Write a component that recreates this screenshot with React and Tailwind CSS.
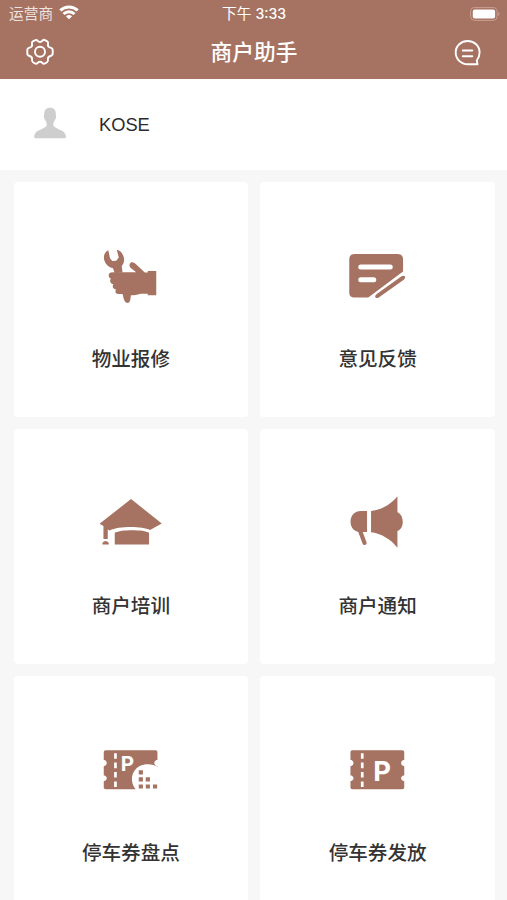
import React from 'react'

const RepairIcon = () => (
    <svg viewBox="1.25 0 80 75" className="w-20 h-[75px] fill-[#a67362]">
        <path d="M18.6 15.2 C14.5 17 13.4 21.5 14.6 25.5 C15.8 29.5 19 32.3 23.2 33.3 L25 38 L32.8 37.5 L32 31 C34.3 28.5 35 25 33.8 21.5 C32.7 18 30.2 15.4 27 14.8 L29 22.5 L26.5 25.8 L22.5 26 L20.2 23.2 Z" />
        <path d="M24 37.3 H46.5 L41 33 C39 31 39.5 28 42 27.3 C43.5 27 44.5 27.8 46 29 L55 37.5 H58 V36 H66.5 V60.3 H58 V58.8 H51 C47 59.8 44 60.3 41.2 60.3 L40.5 65 C40 67.5 38.5 68.3 37 67.8 C35.5 67.3 34.7 66 34 64 L32.8 59 H28 C25.5 58.5 25 56.5 26.3 54.5 C23.3 54.3 22 51.5 23.7 49.3 C20.5 48.8 19.5 46 21.2 43.6 C18.2 42.8 18.3 38 21 37.4 Z" />
    </svg>
)

const FeedbackIcon = () => (
    <svg viewBox="3.25 0 80 75" className="w-20 h-[75px] fill-[#a67362]">
        <path d="M19.5 19 H63 Q68.3 19 68.3 24.5 V36.5 L33.5 62.5 H19.5 Q14.5 62.5 14.5 57.5 V24.5 Q14.5 19 19.5 19 Z" />
        <path d="M26 32 H55.5 M26 44.7 H39" fill="none" stroke="#fff" strokeWidth="5" strokeLinecap="round" />
        <path d="M66.8 41.3 Q69.5 39.8 70.3 41.7 Q70.8 43.2 69 44.7 L44 62.4 Q41.5 63.6 40.5 62.2 Q39.8 60.8 42 59.1 Z" />
    </svg>
)

const TrainingIcon = () => (
    <svg viewBox="1.25 -3 80 75" className="w-20 h-[75px] fill-[#a67362]">
        <path d="M41.3 14 L72 38.5 L60.3 45 C53 41.2 29 40.8 20 45.5 L18 44.5 V54 H13.7 V41 L9.8 38.8 Z" />
        <path d="M25 59.6 V47.8 C31 44.5 54 44.5 59.3 47.8 V59.6 Z" />
        <path d="M12.7 59.6 V57.8 Q15.8 54.2 19 57.8 V59.6 Z" />
    </svg>
)

const NoticeIcon = () => (
    <svg viewBox="3.25 -3 80 75" className="w-20 h-[75px] fill-[#a67362]">
        <path d="M32.3 26 V47 H28 L31.8 57.5 C32.5 60.2 28.8 61 27.8 58.5 L23.5 47 C18.5 45.5 15.8 41.5 15.8 36.7 C15.8 30.5 20 26 26 26 Z" />
        <path d="M36.3 26 C46 25 56 19.5 62.7 11.2 V27.3 C66 28.5 68 32.5 68 37 C68 41.3 66 44.8 62.7 46 V62.8 C56 54 46 48.3 36.3 47.2 Z" />
    </svg>
)

const CheckTicketIcon = () => (
    <svg viewBox="1.25 -6 80 75" className="w-20 h-[75px] fill-[#a67362]">
        <path d="M16 15.2 H66 Q67.7 15.2 67.7 17 V24.7 C63.5 25.5 63.5 30.3 67.7 31.2 V54.3 H16 Q14 54.3 14 52.5 V46.2 C18 45.2 18 41 14 40.2 V31.2 C18 30.3 18 25.5 14 24.7 V17 Q14 15.2 16 15.2 Z" />
        <path d="M25.7 18.2 V54" fill="none" stroke="#fff" strokeWidth="2.7" strokeDasharray="5.6 3.8" />
        <text x="31" y="36" fontSize="20.5" fontWeight="700" fill="#fff" className="font-['Inter',sans-serif]">P</text>
        <path d="M68 31.7 C63.5 29 56 28 50 31 C41 36 39.8 46.5 46 54.5 V56 H70 V31.7 Z" fill="#fff" />
        <path d="M49 35.3 h4.2 v4.2 h-4.2 z M49 42.3 h4.2 v4.2 h-4.2 z M56 42.3 h4.2 v4.2 h-4.2 z M49 49.4 h4.2 v4.2 h-4.2 z M56 49.4 h4.2 v4.2 h-4.2 z M63.2 49.4 h4.2 v4.2 h-4.2 z" />
    </svg>
)

const TicketIcon = () => (
    <svg viewBox="3.25 -6 80 75" className="w-20 h-[75px] fill-[#a67362]">
        <path d="M17.5 15.2 H67.5 Q69.5 15.2 69.5 17 V24.7 C65.3 25.5 65.3 30.3 69.5 31.2 V40.2 C65.3 41 65.3 45.2 69.5 46.2 V52.5 Q69.5 54.3 67.5 54.3 H17.5 Q15.7 54.3 15.7 52.5 V46.2 C19.8 45.2 19.8 41 15.7 40.2 V31.2 C19.8 30.3 19.8 25.5 15.7 24.7 V17 Q15.7 15.2 17.5 15.2 Z" />
        <path d="M27.5 18.2 V54" fill="none" stroke="#fff" strokeWidth="2.7" strokeDasharray="5.6 3.8" />
        <text x="38.6" y="46" fontSize="27.3" fontWeight="700" fill="#fff" className="font-['Inter',sans-serif]">P</text>
    </svg>
)

const menus = [
    { title: '物业报修', Icon: RepairIcon },
    { title: '意见反馈', Icon: FeedbackIcon },
    { title: '商户培训', Icon: TrainingIcon },
    { title: '商户通知', Icon: NoticeIcon },
    { title: '停车券盘点', Icon: CheckTicketIcon },
    { title: '停车券发放', Icon: TicketIcon },
]

const StatusBar = () => (
    <div className="grid grid-cols-3 items-center h-7 pl-[9px] pr-[6px] text-[14.7px] leading-7">
        <div className="flex items-center gap-[6px] text-white/80">
            <span>运营商</span>
            <svg viewBox="0 0 20 15" className="w-5 h-[15px] -mt-[3px]" fill="none" stroke="#fff" strokeWidth="3">
                <path d="M1.3 5.4 C6.3 .7 13.7 .7 18.7 5.4" />
                <path d="M4.5 9 C7.7 6 12.3 6 15.5 9" />
                <path d="M10 14.2 L6.9 11.2 Q10 8.7 13.1 11.2 Z" fill="#fff" stroke="none" />
            </svg>
        </div>
        <div className="pr-[2px] text-center whitespace-nowrap">
            下午 <span className="font-['Inter',sans-serif] text-[14px] font-medium">3:33</span>
        </div>
        <svg viewBox="0 0 31 14" className="w-[31px] h-[14px] -mt-px justify-self-end">
            <rect x=".6" y=".6" width="26.5" height="12.8" rx="4" fill="none" stroke="#c79f92" />
            <rect x="2.8" y="2.6" width="22.3" height="8.8" rx="2" fill="#fff" />
            <path d="M28.3 4.8 Q31 7 28.3 9.2 Z" fill="#c79f92" />
        </svg>
    </div>
)

const App = () => {
    return (
        <div className="h-[900px] overflow-hidden bg-[#f7f7f7] font-['Liberation_Sans','Noto_Sans_CJK_SC',sans-serif]">
            <header className="h-[79px] bg-[#a67362] text-white">
                <StatusBar />
                <div className="flex items-center justify-between h-12 pl-[26px] pr-[25px]">
                    <svg viewBox="0 0 28 28" className="w-7 h-7" fill="none" stroke="#fff" strokeWidth="1.9" strokeLinejoin="round">
                        <path d="M9 2.4 C10 1.5 11 2 11.7 2.9 C13 4.3 15 4.3 16.3 2.9 C17 2 18 1.5 19 2.1 L21.2 3.4 C22.2 4 22.3 5 22 6 C21.6 7.8 22.5 9.2 24.3 9.6 C26 10 26.7 10.6 26.7 12 V15.4 C26.7 17 26 17.5 24.3 18 C22.5 18.5 21.7 19.8 22 21.5 C22.3 22.8 22.2 23.5 21 24.3 L19 25.5 C18 26.1 17 25.7 16.3 24.8 C15 23.3 13 23.3 11.7 24.8 C11 25.7 10 26.1 9 25.5 L7 24.3 C5.8 23.5 5.7 22.8 6 21.5 C6.3 19.8 5.5 18.5 3.7 18 C2 17.5 1.3 17 1.3 15.4 V12 C1.3 10.6 2 10 3.7 9.6 C5.5 9.2 6.4 7.8 6 6 C5.7 5 5.8 4 6.8 3.4 Z" />
                        <circle cx="14" cy="13.8" r="5" />
                    </svg>
                    <h1 className="pt-0.5 text-[21.7px] leading-8 font-medium">商户助手</h1>
                    <svg viewBox="0.5 0.5 28 28" className="w-7 h-7 mt-px" fill="none" stroke="#fff" strokeWidth="1.9" strokeLinecap="round" strokeLinejoin="round">
                        <path d="M23.3 22 C25.1 19.8 26.1 17.1 26.1 14 C26.1 7.3 20.8 2.5 14.2 2.5 C7.6 2.5 2.2 7.3 2.2 14 C2.2 20.7 7.6 25.8 14.2 25.8 H24 Z" />
                        <path d="M9.3 12 H18.8 M9.3 17.8 H18.8" />
                    </svg>
                </div>
            </header>

            <div className="flex items-center h-[91px] pl-[34px] bg-white">
                <svg viewBox="0 0 32 32" className="w-8 h-8 mb-[3px] fill-[#cecece]">
                    <path d="M16 .7 C20 .7 22 3.2 21.8 7 L22.2 9.5 C22.2 11 21.5 12 20.8 13 C20 15 19.2 16 19.2 18 C20 20.5 24 21.8 27 23.2 C30.5 24.8 31.8 27 32 30 Q32 31.3 30.7 31.3 H1.3 Q0 31.3 .2 30 C.3 27 1.5 24.8 5 23.2 C8 21.8 12.2 20.5 12.8 18 C12.8 16 12 15 11.3 13 C10.5 12 9.8 11 9.8 9.5 L10.2 7 C10 3.2 12 .7 16 .7 Z" />
                </svg>
                <span className="ml-[33px] pt-px text-[18.3px] text-[#2b2b2b]">KOSE</span>
            </div>

            <div className="grid grid-cols-2 gap-3 pl-[13.5px] pr-3 pt-[12.4px]">
                {menus.map(({ title, Icon }) => (
                    <div key={title} className="flex flex-col items-center h-[234.8px] pt-[52.6px] bg-white rounded-sm">
                        <Icon />
                        <span className="mt-[34.5px] text-[19.6px] leading-[30px] font-medium text-[#333]">{title}</span>
                    </div>
                ))}
            </div>
        </div>
    )
}

export default App
